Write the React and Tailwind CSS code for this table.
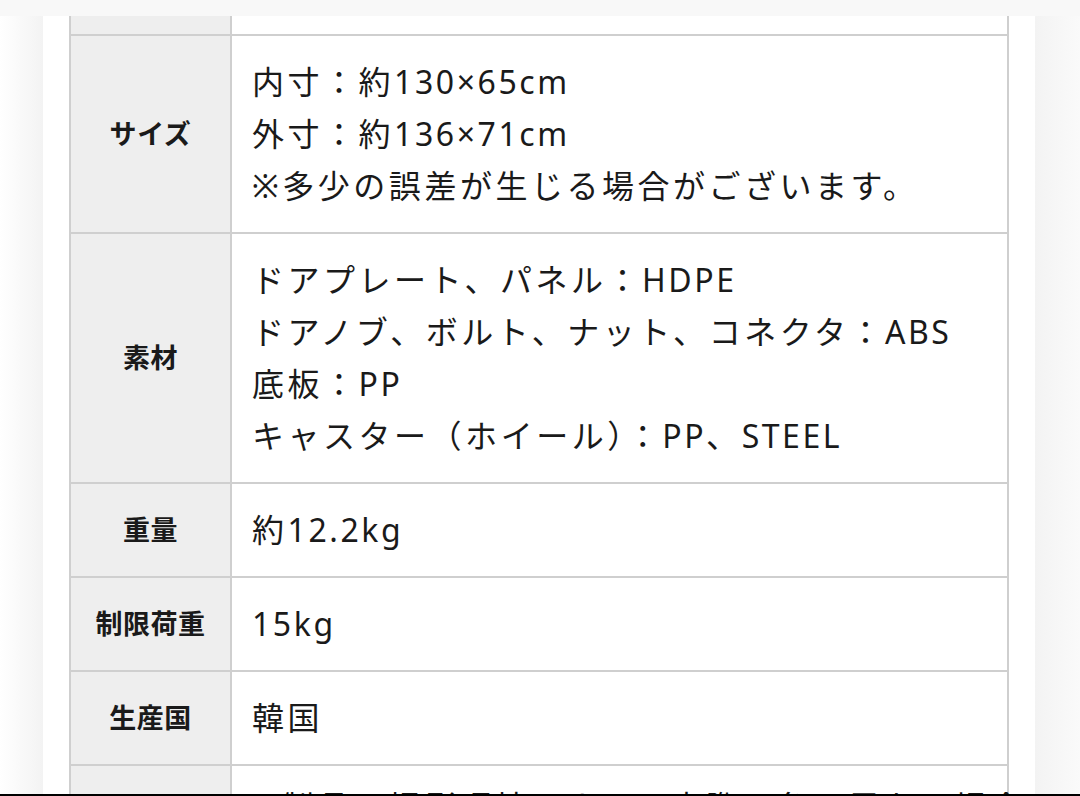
import React from 'react';

// spec rows shown in the product table
const specs = [
  {
    label: 'サイズ',
    lines: ['内寸：約130×65cm', '外寸：約136×71cm', '※多少の誤差が生じる場合がございます。'],
  },
  {
    label: '素材',
    lines: [
      'ドアプレート、パネル：HDPE',
      'ドアノブ、ボルト、ナット、コネクタ：ABS',
      '底板：PP',
      'キャスター（ホイール）：PP、STEEL',
    ],
  },
  { label: '重量', lines: ['約12.2kg'] },
  { label: '制限荷重', lines: ['15kg'] },
  { label: '生産国', lines: ['韓国'] },
];

// latin runs get a bit less tracking than the japanese ones
const Line = ({ text }) => (
  <div className="text-[32px] leading-[52px] text-[#1a1a1a] whitespace-nowrap">
    {text.split(/([\x20-\x7e×.]+)/).map((part, i) =>
      /^[\x20-\x7e×.]+$/.test(part) ? (
        <span key={i} className="tracking-[0.08em]">{part}</span>
      ) : (
        <span key={i} className="tracking-[0.11em]">{part}</span>
      )
    )}
  </div>
);

const SpecRow = ({ label, lines, last }) => (
  <div className="flex border-t-2 border-[#cfcfcf]">
    <div className="w-[161px] shrink-0 bg-[#eeeeee] border-r-2 border-[#cfcfcf] flex items-center justify-center">
      <span className="text-[27px] font-bold tracking-[0.02em] text-[#1a1a1a]">{label}</span>
    </div>
    <div className={`flex-1 pl-5 ${last ? 'pt-[15px] pb-5' : 'py-5'}`}>
      {lines.map((line) => (
        <Line key={line} text={line} />
      ))}
    </div>
  </div>
);

export default function App() {
  return (
    <div className="h-[796px] w-[1080px] flex flex-col overflow-hidden bg-white font-['Noto_Sans','Noto_Sans_CJK_JP',sans-serif]">
      <div className="h-4 shrink-0 bg-[#f8f8f8]" />
      <div className="flex-1 flex min-h-0">
        <div className="w-[43px] shrink-0 bg-gradient-to-r from-white to-[#f3f3f3]" />
        <div className="w-[992px] shrink-0 bg-white px-[26px] overflow-hidden">
          <div className="border-x-2 border-[#cfcfcf]">
            {/* previous row, cut off at the top */}
            <div className="flex h-[18px]">
              <div className="w-[161px] shrink-0 bg-[#eeeeee] border-r-2 border-[#cfcfcf]" />
              <div className="flex-1" />
            </div>
            {specs.map((s) => (
              <SpecRow key={s.label} label={s.label} lines={s.lines} />
            ))}
            <SpecRow
              label="備考"
              last
              lines={[
                '※製品の撮影環境によって実際の色と異なる場合があります。',
                '※モニターの設定により色味が異なって見える場合がございます。',
              ]}
            />
          </div>
        </div>
        <div className="flex-1 bg-gradient-to-r from-[#f3f3f3] to-[#fafafa]" />
      </div>
      <div className="h-[2px] shrink-0 bg-black" />
    </div>
  );
}
